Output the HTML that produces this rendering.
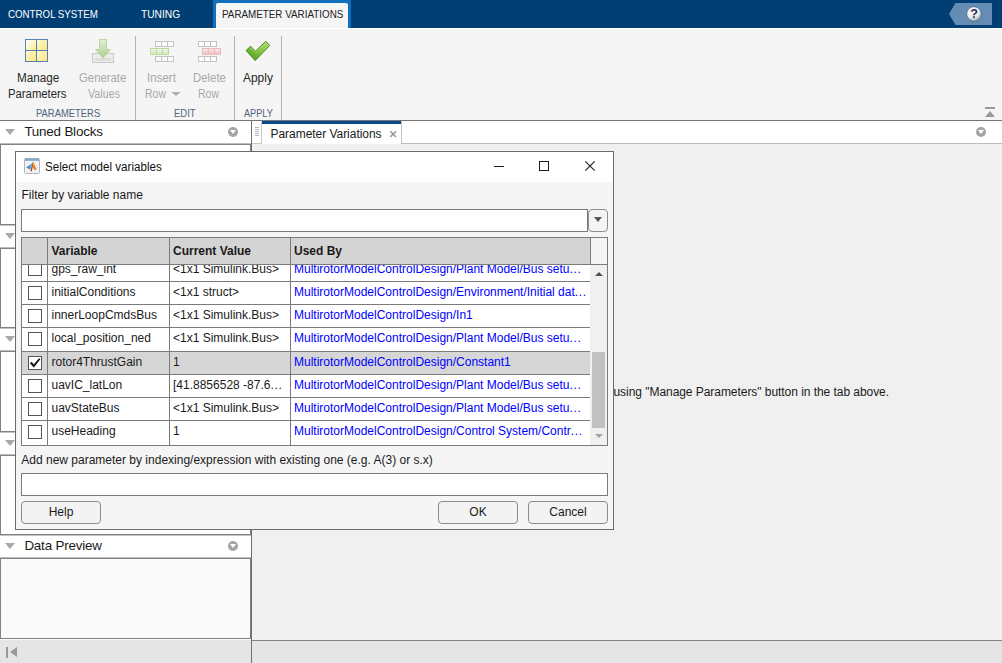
<!DOCTYPE html>
<html><head><meta charset="utf-8"><title>Select model variables</title>
<style>
html,body{margin:0;padding:0}
body{width:1002px;height:663px;overflow:hidden;position:relative;background:#f0f0f0;font-family:"Liberation Sans",sans-serif;font-size:12px;color:#1a1a1a}
div,span{box-sizing:border-box}
.a{position:absolute}
.t{position:absolute;white-space:nowrap;line-height:14px;font-size:12px}
.sx{display:inline-block;transform-origin:0 50%}
#topbar{left:0;top:0;width:1002px;height:28px;background:#013e73}
#acttabf{left:213px;top:0;width:138px;height:28px;background:#116fbe}
#acttab{left:216px;top:3px;width:132px;height:26px;background:#f5f5f5;border-radius:2px 2px 0 0}
#strip{left:0;top:28px;width:1002px;height:92px;background:#f5f5f5;border-top:1px solid #fff}
#stripline{left:0;top:120px;width:1002px;height:1px;background:#757575}
.vsep{position:absolute;top:36px;width:1px;height:84px;background:#b2b2b2}
.tab{color:#fff}
.tl{color:#262626}
.dis{color:#a8a8a8}
.sec{color:#52627a}
.phead{position:absolute;left:0;width:251px;height:23px;background:#fff;border-bottom:1px solid #bdbdbd}
.tri{position:absolute;left:5px;top:8px;width:0;height:0;border-left:5px solid transparent;border-right:5px solid transparent;border-top:6px solid #a9a9a9}
.circ{position:absolute;width:10px;height:10px;border-radius:50%;background:#a4a4a4}
.circ:after{content:"";position:absolute;left:2px;top:3px;border-left:3px solid transparent;border-right:3px solid transparent;border-top:4.8px solid #fff}
.pbody{position:absolute;left:0;width:251px;background:#fff;border:1px solid #828282;border-right-color:#7c7c7c}
.hl{position:absolute;height:1px;background:#7b7b7b}
.vl{position:absolute;width:1px;background:#7b7b7b}
.cb{position:absolute;left:28px;width:14px;height:14px;background:#fff;border:1px solid #555}
.btn{position:absolute;height:23px;border:1px solid #8c8c8c;border-radius:4px;background:#f3f3f3;text-align:center;line-height:21px;font-size:12px;color:#1a1a1a}
.lnk{color:#0000ff}
</style></head><body>
<div id="topbar" class="a"></div><div id="acttabf" class="a"></div><div id="acttab" class="a"></div>
<div class="t tab" style="left:8px;top:7px;font-size:11.2px;"><span class="sx" style="transform:scaleX(0.869)">CONTROL SYSTEM</span></div>
<div class="t tab" style="left:140.5px;top:7px;font-size:11.2px;"><span class="sx" style="transform:scaleX(0.911)">TUNING</span></div>
<div class="t tab" style="left:221.5px;top:7px;color:#222;font-size:11.2px;"><span class="sx" style="transform:scaleX(0.879)">PARAMETER VARIATIONS</span></div>
<svg class="a" style="left:948px;top:2px" width="46" height="24" viewBox="0 0 46 24"><defs><radialGradient id="hg" cx="40%" cy="30%" r="75%"><stop offset="0" stop-color="#ffffff"/><stop offset="0.6" stop-color="#e8e8e8"/><stop offset="1" stop-color="#8f9aa6"/></radialGradient></defs><path d="M1 12 L7.5 1 H44 V23 H7.5 Z" fill="#658cb3"/><circle cx="26" cy="12" r="7.3" fill="url(#hg)" stroke="#3b587a" stroke-width="0.6"/><text x="26" y="16.4" text-anchor="middle" font-family="Liberation Sans, sans-serif" font-weight="bold" font-size="12.5" fill="#1d2f5a">?</text></svg>
<div id="strip" class="a"></div><div id="stripline" class="a"></div>
<div class="vsep" style="left:135px"></div>
<div class="vsep" style="left:234px"></div>
<div class="vsep" style="left:281px"></div>
<svg class="a" style="left:25px;top:39px" width="23" height="23" viewBox="0 0 23 23"><defs><linearGradient id="y1" x1="0" y1="0" x2="1" y2="1"><stop offset="0" stop-color="#ffffff"/><stop offset="1" stop-color="#fbeb8e"/></linearGradient><linearGradient id="y2" x1="0" y1="0" x2="1" y2="1"><stop offset="0" stop-color="#fef8cf"/><stop offset="1" stop-color="#f9e684"/></linearGradient></defs><rect x="0.5" y="0.5" width="22" height="22" fill="#5c80ad" stroke="#5c80ad"/><rect x="1" y="1" width="10" height="10" fill="url(#y1)"/><rect x="12" y="1" width="10" height="10" fill="url(#y2)"/><rect x="1" y="12" width="10" height="10" fill="url(#y2)"/><rect x="12" y="12" width="10" height="10" fill="url(#y2)"/></svg>
<svg class="a" style="left:91px;top:38px" width="24" height="25" viewBox="0 0 24 25"><defs><linearGradient id="g1" x1="0" y1="0" x2="0" y2="1"><stop offset="0" stop-color="#e4efd9"/><stop offset="1" stop-color="#a9d08a"/></linearGradient></defs><rect x="1.5" y="15.5" width="21" height="9" fill="#ececec" stroke="#c9c9c9"/><rect x="4" y="20" width="16" height="3" fill="#dcdcdc"/><path d="M8.5 1.5 H15.5 V11.5 H19.5 L12 20 L4.5 11.5 H8.5 Z" fill="url(#g1)" stroke="#b7d6a0" stroke-width="1"/></svg>
<svg class="a" style="left:150px;top:41px" width="25" height="21" viewBox="0 0 25 21"><defs><linearGradient id="grins" x1="0" y1="0" x2="0" y2="1"><stop offset="0" stop-color="#f2f9ea"/><stop offset="0.5" stop-color="#e2f1d4"/><stop offset="0.55" stop-color="#cfe8b9"/><stop offset="1" stop-color="#d9edc8"/></linearGradient></defs><rect x="5.5" y="0.5" width="18" height="5" fill="#fbfbfb" stroke="#c4c4c4"/><rect x="11.00" y="0.5" width="1" height="5" fill="#c4c4c4"/><rect x="17.00" y="0.5" width="1" height="5" fill="#c4c4c4"/><rect x="0.5" y="7.5" width="18" height="6" fill="url(#grins)" stroke="#bcdca4"/><rect x="6.00" y="7.5" width="1" height="6" fill="#bcdca4"/><rect x="12.00" y="7.5" width="1" height="6" fill="#bcdca4"/><rect x="5.5" y="15.5" width="18" height="5" fill="#fbfbfb" stroke="#c4c4c4"/><rect x="11.00" y="15.5" width="1" height="5" fill="#c4c4c4"/><rect x="17.00" y="15.5" width="1" height="5" fill="#c4c4c4"/></svg>
<svg class="a" style="left:198px;top:41px" width="25" height="21" viewBox="0 0 25 21"><defs><linearGradient id="grdel" x1="0" y1="0" x2="0" y2="1"><stop offset="0" stop-color="#fbe9e9"/><stop offset="0.5" stop-color="#f7d6d6"/><stop offset="0.55" stop-color="#f2c2c2"/><stop offset="1" stop-color="#f5cccc"/></linearGradient></defs><rect x="0.5" y="0.5" width="18" height="5" fill="#fbfbfb" stroke="#c4c4c4"/><rect x="6.00" y="0.5" width="1" height="5" fill="#c4c4c4"/><rect x="12.00" y="0.5" width="1" height="5" fill="#c4c4c4"/><rect x="4.5" y="7.5" width="18" height="6" fill="url(#grdel)" stroke="#ecbaba"/><rect x="10.00" y="7.5" width="1" height="6" fill="#ecbaba"/><rect x="16.00" y="7.5" width="1" height="6" fill="#ecbaba"/><rect x="0.5" y="15.5" width="18" height="5" fill="#fbfbfb" stroke="#c4c4c4"/><rect x="6.00" y="15.5" width="1" height="5" fill="#c4c4c4"/><rect x="12.00" y="15.5" width="1" height="5" fill="#c4c4c4"/></svg>
<svg class="a" style="left:245px;top:40px" width="27" height="22" viewBox="0 0 27 22"><defs><linearGradient id="ck" x1="1" y1="0" x2="0.3" y2="1"><stop offset="0" stop-color="#b4e070"/><stop offset="0.5" stop-color="#86c83e"/><stop offset="1" stop-color="#559f24"/></linearGradient></defs><path d="M1.1 10.5 L5.5 6.2 L10.4 11.2 L20.8 1.3 L24.7 5.5 L10.2 20.6 Z" fill="url(#ck)" stroke="#3d7d1d" stroke-width="0.9" stroke-linejoin="round"/><path d="M5.5 7.6 L10.4 12.6 L20.8 2.7" stroke="#c4e88c" stroke-width="0.8" fill="none" opacity="0.8"/></svg>
<div class="t tl" style="left:16.6px;top:71px;"><span class="sx" style="transform:scaleX(0.975)">Manage</span></div>
<div class="t tl" style="left:8.4px;top:87px;"><span class="sx" style="transform:scaleX(0.943)">Parameters</span></div>
<div class="t dis" style="left:79.4px;top:71px;"><span class="sx" style="transform:scaleX(0.945)">Generate</span></div>
<div class="t dis" style="left:87.8px;top:87px;"><span class="sx" style="transform:scaleX(0.894)">Values</span></div>
<div class="t dis" style="left:146.7px;top:71px;"><span class="sx" style="transform:scaleX(0.963)">Insert</span></div>
<div class="t dis" style="left:144.7px;top:87px;"><span class="sx" style="transform:scaleX(0.874)">Row</span></div>
<div class="a" style="left:170.5px;top:92px;width:0;height:0;border-left:5px solid transparent;border-right:5px solid transparent;border-top:4px solid #b0b0b0"></div>
<div class="t dis" style="left:192.5px;top:71px;"><span class="sx" style="transform:scaleX(0.948)">Delete</span></div>
<div class="t dis" style="left:198.3px;top:87px;"><span class="sx" style="transform:scaleX(0.874)">Row</span></div>
<div class="t tl" style="left:243.4px;top:71px;"><span class="sx" style="transform:scaleX(0.995)">Apply</span></div>
<div class="t sec" style="left:35.5px;top:106px;font-size:11.2px;"><span class="sx" style="transform:scaleX(0.842)">PARAMETERS</span></div>
<div class="t sec" style="left:174px;top:106px;font-size:11.2px;"><span class="sx" style="transform:scaleX(0.846)">EDIT</span></div>
<div class="t sec" style="left:243.8px;top:106px;font-size:11.2px;"><span class="sx" style="transform:scaleX(0.819)">APPLY</span></div>
<div class="a" style="left:985px;top:107px;width:10px;height:2px;background:#9a9a9a"></div><div class="a" style="left:985px;top:111px;width:0;height:0;border-left:5px solid transparent;border-right:5px solid transparent;border-bottom:6px solid #9a9a9a"></div>
<div class="phead" style="top:121px"><div class="tri"></div><div class="circ" style="left:228px;top:6px"></div><div class="t" style="left:24.4px;top:3.2px;font-size:13.4px;letter-spacing:-0.2px;line-height:16px">Tuned Blocks</div></div>
<div class="pbody" style="top:144px;height:81px;background:#fff"></div>
<div class="phead" style="top:225px"><div class="tri"></div><div class="circ" style="left:228px;top:6px"></div></div>
<div class="a" style="left:0;top:225px;width:251px;height:1px;background:#c2c2c2"></div>
<div class="pbody" style="top:248px;height:80px;background:#fff"></div>
<div class="phead" style="top:328px"><div class="tri"></div><div class="circ" style="left:228px;top:6px"></div></div>
<div class="a" style="left:0;top:328px;width:251px;height:1px;background:#c2c2c2"></div>
<div class="pbody" style="top:351px;height:81px;background:#fff"></div>
<div class="phead" style="top:432px"><div class="tri"></div><div class="circ" style="left:228px;top:6px"></div></div>
<div class="a" style="left:0;top:432px;width:251px;height:1px;background:#c2c2c2"></div>
<div class="pbody" style="top:455px;height:80px;background:#fff"></div>
<div class="phead" style="top:535px"><div class="tri"></div><div class="circ" style="left:228px;top:6px"></div><div class="t" style="left:24.4px;top:3.2px;font-size:13.4px;letter-spacing:-0.2px;line-height:16px">Data Preview</div></div>
<div class="a" style="left:0;top:535px;width:251px;height:1px;background:#c2c2c2"></div>
<div class="pbody" style="top:558px;height:81px;background:#fafafa"></div>
<div class="a" style="left:251px;top:121px;width:1px;height:542px;background:#6f6f6f"></div>
<div class="a" style="left:0;top:639px;width:1002px;height:24px;background:#e5e5e5;border-top:1px solid #fafafa"></div>
<div class="a" style="left:252px;top:639px;width:750px;height:1px;background:#f0f0f0"></div><div class="a" style="left:252px;top:640px;width:750px;height:1px;background:#848484"></div>
<div class="a" style="left:251px;top:639px;width:1px;height:24px;background:#6f6f6f"></div>
<div class="a" style="left:6px;top:647px;width:2px;height:11px;background:#999"></div><div class="a" style="left:10px;top:647px;width:0;height:0;border-top:5.5px solid transparent;border-bottom:5.5px solid transparent;border-right:7px solid #999"></div>
<div class="a" style="left:252px;top:121px;width:750px;height:23px;background:#fff;border-bottom:1px solid #bdbdbd"></div>
<div class="a" style="left:252px;top:121px;width:10px;height:23px;background:#fff;border-right:1px solid #c8c8c8;border-bottom:1px solid #c8c8c8"></div>
<div class="a" style="left:255px;top:127px;width:4px;height:1px;background:#b5b5b5"></div>
<div class="a" style="left:255px;top:129px;width:4px;height:1px;background:#b5b5b5"></div>
<div class="a" style="left:255px;top:131px;width:4px;height:1px;background:#b5b5b5"></div>
<div class="a" style="left:255px;top:133px;width:4px;height:1px;background:#b5b5b5"></div>
<div class="a" style="left:255px;top:135px;width:4px;height:1px;background:#b5b5b5"></div>
<div class="a" style="left:262px;top:121px;width:139px;height:23px;background:#fff;border-top:3px solid #0b4a8a"></div>
<div class="a" style="left:401px;top:121px;width:1px;height:22px;background:#c4c4c4"></div>
<div class="t" style="left:270.5px;top:127px;letter-spacing:-0.04px">Parameter Variations</div>
<svg class="a" style="left:389px;top:130px" width="9" height="9" viewBox="0 0 9 9"><path d="M1.3 1.3 L7 7 M7 1.3 L1.3 7" stroke="#969696" stroke-width="1.5" fill="none"/></svg>
<div class="circ" style="left:976px;top:127px"></div>
<div class="t" style="left:613.5px;top:385.4px;color:#1a1a1a;letter-spacing:-0.05px">using "Manage Parameters" button in the tab above.</div>
<div class="a" style="left:15px;top:151px;width:599px;height:379px;background:#f5f5f5;border:1px solid #6c6c6c"></div>
<div class="a" style="left:16px;top:152px;width:597px;height:30px;background:#fff"></div>
<svg class="a" style="left:24px;top:158px" width="16" height="16" viewBox="0 0 16 16"><defs><linearGradient id="mb" x1="0" y1="0" x2="1" y2="0"><stop offset="0" stop-color="#2f6fbd"/><stop offset="1" stop-color="#7cc0e6"/></linearGradient><linearGradient id="mo" x1="0" y1="0" x2="1" y2="1"><stop offset="0" stop-color="#f6b030"/><stop offset="1" stop-color="#e4601a"/></linearGradient></defs><rect x="0.5" y="0.5" width="15" height="15" rx="1.2" fill="#f2f2f2" stroke="#b4b4b4"/><rect x="1" y="1" width="14" height="2" fill="#8db3d9"/><rect x="1" y="0.6" width="14" height="0.8" fill="#6f9ac6"/><path d="M2.2 9.2 L6.5 6.6 C7.5 5.8 8.3 4.9 8.8 4.3 L7.3 10 L5.5 11.6 Z" fill="url(#mb)"/><path d="M8.8 4.3 C9 4 9.3 3.9 9.5 4.1 L8.8 9 L7.6 13.2 C7.2 13.6 6.6 13.6 6.3 13 L7.3 10 Z" fill="#a8381a"/><path d="M9.5 4.1 C10.5 5.5 11.5 9.5 12.8 11.6 C12 11.2 11.2 11.4 10.6 12.2 C10 11 9.2 10.2 8.6 9.2 Z" fill="url(#mo)"/><path d="M9.4 4.4 L10 7 L9.1 7.8 Z" fill="#f9d24a"/></svg>
<div class="t " style="left:45px;top:159.6px;color:#111"><span class="sx" style="transform:scaleX(0.967)">Select model variables</span></div>
<svg class="a" style="left:490px;top:158px" width="110" height="16" viewBox="0 0 110 16"><path d="M4 8.5 H14" stroke="#1a1a1a" stroke-width="1" fill="none"/><rect x="49.5" y="3.5" width="9" height="9" fill="none" stroke="#1a1a1a" stroke-width="1"/><path d="M95.3 3.3 L104.7 12.7 M104.7 3.3 L95.3 12.7" stroke="#1a1a1a" stroke-width="1.1" fill="none"/></svg>
<div class="t" style="left:21.5px;top:187.6px">Filter by variable name</div>
<div class="a" style="left:21px;top:209px;width:567px;height:23px;background:#fff;border:1px solid #7a7a7a"></div>
<div class="a" style="left:588px;top:209px;width:20px;height:23px;background:#f4f4f4;border:1px solid #8c8c8c;border-radius:4px"></div>
<div class="a" style="left:594px;top:217px;width:0;height:0;border-left:4px solid transparent;border-right:4px solid transparent;border-top:5.5px solid #555"></div>
<div class="a" style="left:21px;top:237px;width:587px;height:209px;background:#fff;border:1px solid #7b7b7b"></div>
<div class="cb" style="top:262px"></div>
<div class="t" style="left:51.5px;top:262px">gps_raw_int</div>
<div class="t" style="left:173px;top:262px">&lt;1x1 Simulink.Bus&gt;</div>
<div class="t lnk" style="left:294px;top:262px">MultirotorModelControlDesign/Plant Model/Bus setu<span style="letter-spacing:0.7px">...</span></div>
<div class="cb" style="top:286px"></div>
<div class="t" style="left:51.5px;top:285px">initialConditions</div>
<div class="t" style="left:173px;top:285px">&lt;1x1 struct&gt;</div>
<div class="t lnk" style="left:294px;top:285px">MultirotorModelControlDesign/Environment/Initial dat<span style="letter-spacing:0.7px">...</span></div>
<div class="cb" style="top:309px"></div>
<div class="t" style="left:51.5px;top:308px">innerLoopCmdsBus</div>
<div class="t" style="left:173px;top:308px">&lt;1x1 Simulink.Bus&gt;</div>
<div class="t lnk" style="left:294px;top:308px">MultirotorModelControlDesign/In1</div>
<div class="cb" style="top:332px"></div>
<div class="t" style="left:51.5px;top:331px">local_position_ned</div>
<div class="t" style="left:173px;top:331px">&lt;1x1 Simulink.Bus&gt;</div>
<div class="t lnk" style="left:294px;top:331px">MultirotorModelControlDesign/Plant Model/Bus setu<span style="letter-spacing:0.7px">...</span></div>
<div class="a" style="left:22px;top:352px;width:568px;height:22px;background:#d6d6d6"></div>
<div class="cb" style="top:356px"></div>
<svg class="a" style="left:28px;top:356px" width="14" height="14" viewBox="0 0 14 14"><path d="M1.9 7.3 L3.7 5.8 L5.7 8.5 L11.1 2.3 L12.3 3.3 L5.8 11.4 Z" fill="#0d0d0d"/></svg>
<div class="t" style="left:51.5px;top:355px">rotor4ThrustGain</div>
<div class="t" style="left:173px;top:355px">1</div>
<div class="t lnk" style="left:294px;top:355px">MultirotorModelControlDesign/Constant1</div>
<div class="cb" style="top:379px"></div>
<div class="t" style="left:51.5px;top:378px">uavIC_latLon</div>
<div class="t" style="left:173px;top:378px">[41.8856528 -87.6<span style="letter-spacing:0.7px">...</span></div>
<div class="t lnk" style="left:294px;top:378px">MultirotorModelControlDesign/Plant Model/Bus setu<span style="letter-spacing:0.7px">...</span></div>
<div class="cb" style="top:402px"></div>
<div class="t" style="left:51.5px;top:401px">uavStateBus</div>
<div class="t" style="left:173px;top:401px">&lt;1x1 Simulink.Bus&gt;</div>
<div class="t lnk" style="left:294px;top:401px">MultirotorModelControlDesign/Plant Model/Bus setu<span style="letter-spacing:0.7px">...</span></div>
<div class="cb" style="top:425px"></div>
<div class="t" style="left:51.5px;top:424px">useHeading</div>
<div class="t" style="left:173px;top:424px">1</div>
<div class="t lnk" style="left:294px;top:424px">MultirotorModelControlDesign/Control System/Contr<span style="letter-spacing:0.7px">...</span></div>
<div class="hl" style="left:22px;top:281px;width:568px"></div>
<div class="hl" style="left:22px;top:304px;width:568px"></div>
<div class="hl" style="left:22px;top:327px;width:568px"></div>
<div class="hl" style="left:22px;top:351px;width:568px"></div>
<div class="hl" style="left:22px;top:374px;width:568px"></div>
<div class="hl" style="left:22px;top:397px;width:568px"></div>
<div class="hl" style="left:22px;top:420px;width:568px"></div>
<div class="a" style="left:590px;top:265px;width:17px;height:180px;background:#f0f0f0"></div>
<div class="a" style="left:592px;top:352px;width:13px;height:76px;background:#c1c1c1"></div>
<div class="a" style="left:594.5px;top:271.5px;width:0;height:0;border-left:4px solid transparent;border-right:4px solid transparent;border-bottom:4.5px solid #505050"></div>
<div class="a" style="left:594.5px;top:434px;width:0;height:0;border-left:4px solid transparent;border-right:4px solid transparent;border-top:4.5px solid #a3a3a3"></div>
<div class="a" style="left:22px;top:238px;width:569px;height:26px;background:#d4d4d4"></div>
<div class="a" style="left:591px;top:238px;width:16px;height:26px;background:#f5f5f5"></div>
<div class="hl" style="left:22px;top:264px;width:585px"></div>
<div class="vl" style="left:590px;top:238px;height:27px"></div>
<div class="vl" style="left:47px;top:238px;height:208px"></div>
<div class="vl" style="left:169px;top:238px;height:208px"></div>
<div class="vl" style="left:290px;top:238px;height:208px"></div>
<div class="t" style="left:51.5px;top:244px;font-weight:bold">Variable</div>
<div class="t" style="left:173px;top:244px;font-weight:bold">Current Value</div>
<div class="t" style="left:294px;top:244px;font-weight:bold">Used By</div>
<div class="t" style="left:21.3px;top:452.6px">Add new parameter by indexing/expression with existing one (e.g. A(3) or s.x)</div>
<div class="a" style="left:21px;top:473px;width:587px;height:23px;background:#fff;border:1px solid #7a7a7a"></div>
<div class="btn" style="left:21px;top:501px;width:80px">Help</div>
<div class="btn" style="left:438px;top:501px;width:80px">OK</div>
<div class="btn" style="left:528px;top:501px;width:80px">Cancel</div>
</body></html>
